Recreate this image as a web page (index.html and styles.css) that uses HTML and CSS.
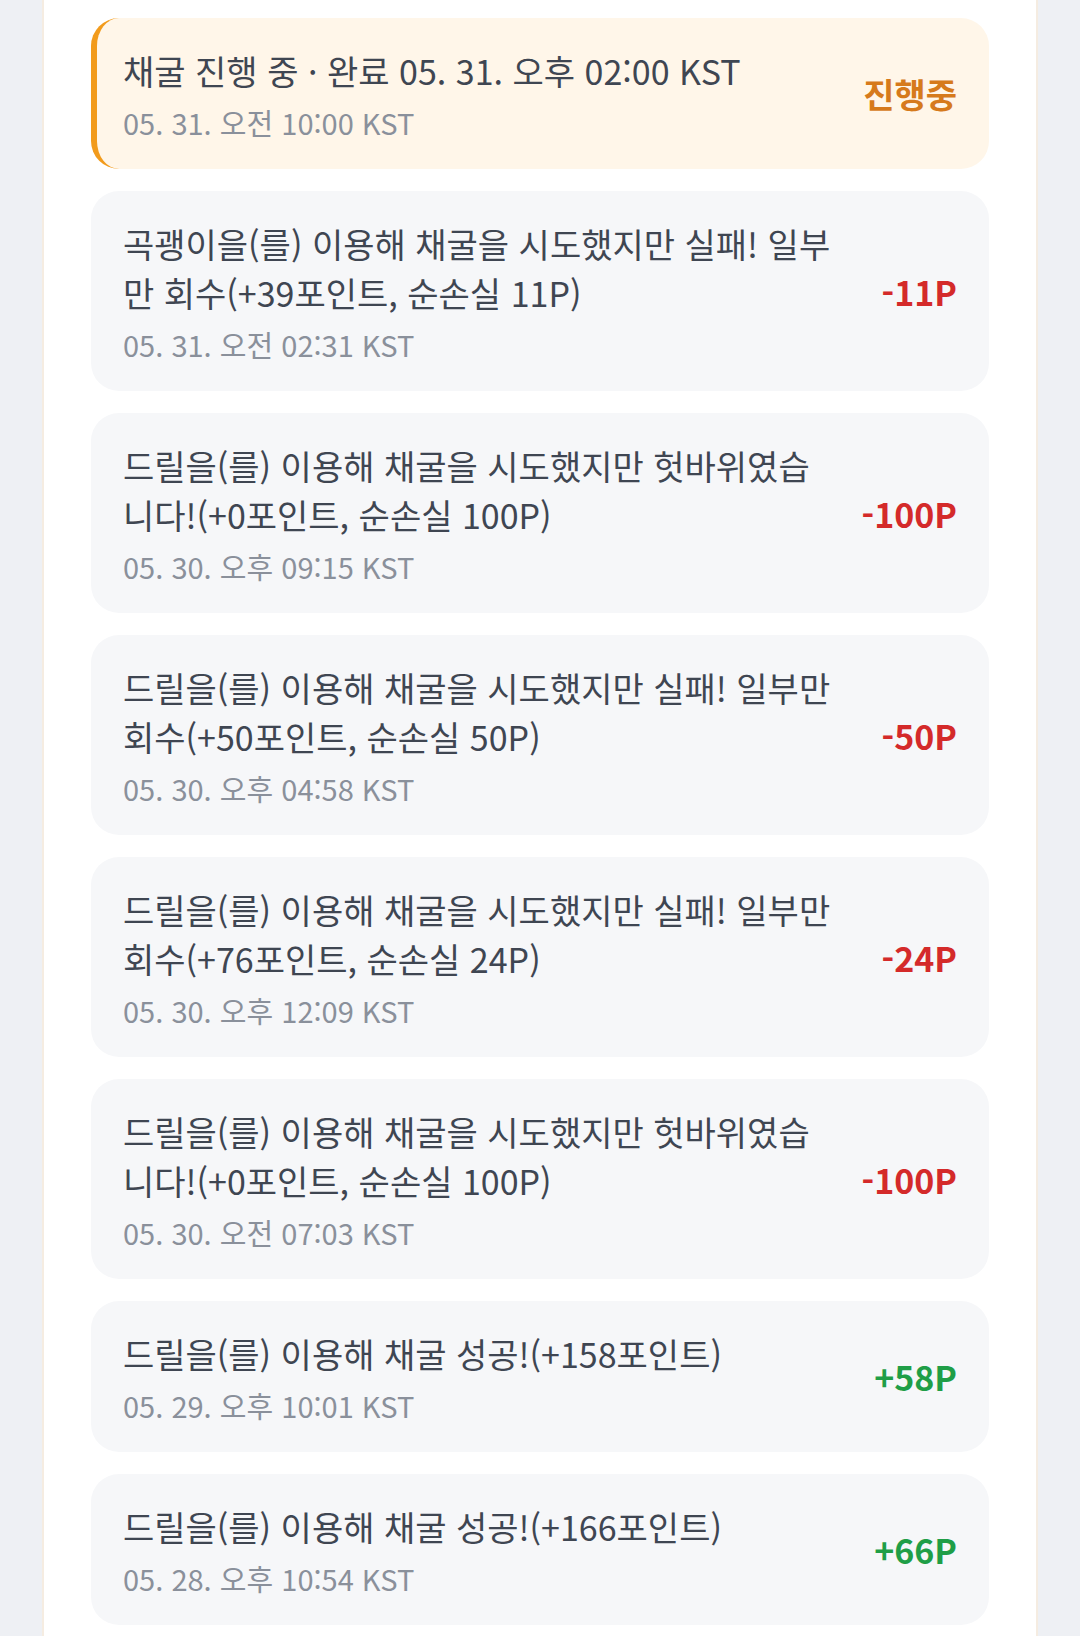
FILE: index.html
```html
<!DOCTYPE html>
<html lang="ko">
<head>
<meta charset="utf-8">
<title>채굴 기록</title>
<link rel="stylesheet" href="styles.css">
</head>
<body>
<main class="panel">
  <ul class="log">
    <li class="item item--active">
      <div class="item__body">
        <p class="item__text">채굴 진행 중 · 완료 05. 31. 오후 02:00 KST</p>
        <p class="item__date">05. 31. 오전 10:00 KST</p>
      </div>
      <span class="item__amount item__amount--pending">진행중</span>
    </li>
    <li class="item">
      <div class="item__body">
        <p class="item__text">곡괭이을(를) 이용해 채굴을 시도했지만 실패! 일부만 회수(+39포인트, 순손실 11P)</p>
        <p class="item__date">05. 31. 오전 02:31 KST</p>
      </div>
      <span class="item__amount item__amount--loss">-11P</span>
    </li>
    <li class="item">
      <div class="item__body">
        <p class="item__text">드릴을(를) 이용해 채굴을 시도했지만 헛바위였습니다!(+0포인트, 순손실 100P)</p>
        <p class="item__date">05. 30. 오후 09:15 KST</p>
      </div>
      <span class="item__amount item__amount--loss">-100P</span>
    </li>
    <li class="item">
      <div class="item__body">
        <p class="item__text">드릴을(를) 이용해 채굴을 시도했지만 실패! 일부만 회수(+50포인트, 순손실 50P)</p>
        <p class="item__date">05. 30. 오후 04:58 KST</p>
      </div>
      <span class="item__amount item__amount--loss">-50P</span>
    </li>
    <li class="item">
      <div class="item__body">
        <p class="item__text">드릴을(를) 이용해 채굴을 시도했지만 실패! 일부만 회수(+76포인트, 순손실 24P)</p>
        <p class="item__date">05. 30. 오후 12:09 KST</p>
      </div>
      <span class="item__amount item__amount--loss">-24P</span>
    </li>
    <li class="item">
      <div class="item__body">
        <p class="item__text">드릴을(를) 이용해 채굴을 시도했지만 헛바위였습니다!(+0포인트, 순손실 100P)</p>
        <p class="item__date">05. 30. 오전 07:03 KST</p>
      </div>
      <span class="item__amount item__amount--loss">-100P</span>
    </li>
    <li class="item">
      <div class="item__body">
        <p class="item__text">드릴을(를) 이용해 채굴 성공!(+158포인트)</p>
        <p class="item__date">05. 29. 오후 10:01 KST</p>
      </div>
      <span class="item__amount item__amount--gain">+58P</span>
    </li>
    <li class="item">
      <div class="item__body">
        <p class="item__text">드릴을(를) 이용해 채굴 성공!(+166포인트)</p>
        <p class="item__date">05. 28. 오후 10:54 KST</p>
      </div>
      <span class="item__amount item__amount--gain">+66P</span>
    </li>
  </ul>
</main>
</body>
</html>
```

FILE: styles.css
```css
* {
  box-sizing: border-box;
}

html, body {
  margin: 0;
  padding: 0;
}

body {
  background: #eef0f4;
  font-family: "Noto Sans CJK KR", "Noto Sans", sans-serif;
  color: #3d4451;
}

.panel {
  width: 996px;
  min-height: 1636px;
  margin: 0 auto;
  background: #ffffff;
  border-left: 2px solid #f5ece1;
  border-right: 2px solid #f5ece1;
  padding: 18px 47px 0 47px;
}

.log {
  list-style: none;
  margin: 0;
  padding: 0;
  display: flex;
  flex-direction: column;
  gap: 22px;
}

.item {
  display: flex;
  align-items: center;
  gap: 44px;
  background: #f6f7f9;
  border-radius: 28px;
  padding: 28px 32px 27px 32px;
}

.item--active {
  background: #fff6e9;
  border-left: 6px solid #f29b1c;
  padding-left: 26px;
}

.item__body {
  flex: 1;
  min-width: 0;
}

.item__text {
  margin: 0;
  font-size: 34px;
  line-height: 49px;
  color: #3f4652;
}

.item__date {
  margin: 7px 0 0 0;
  font-size: 29px;
  line-height: 40px;
  color: #8a909b;
}

.item__amount {
  flex: none;
  font-size: 34px;
  font-weight: 700;
  line-height: 40px;
}

.item__amount--pending {
  color: #d67a1c;
}

.item__amount--loss {
  color: #d42a2a;
}

.item__amount--gain {
  color: #1f9e47;
}
```
